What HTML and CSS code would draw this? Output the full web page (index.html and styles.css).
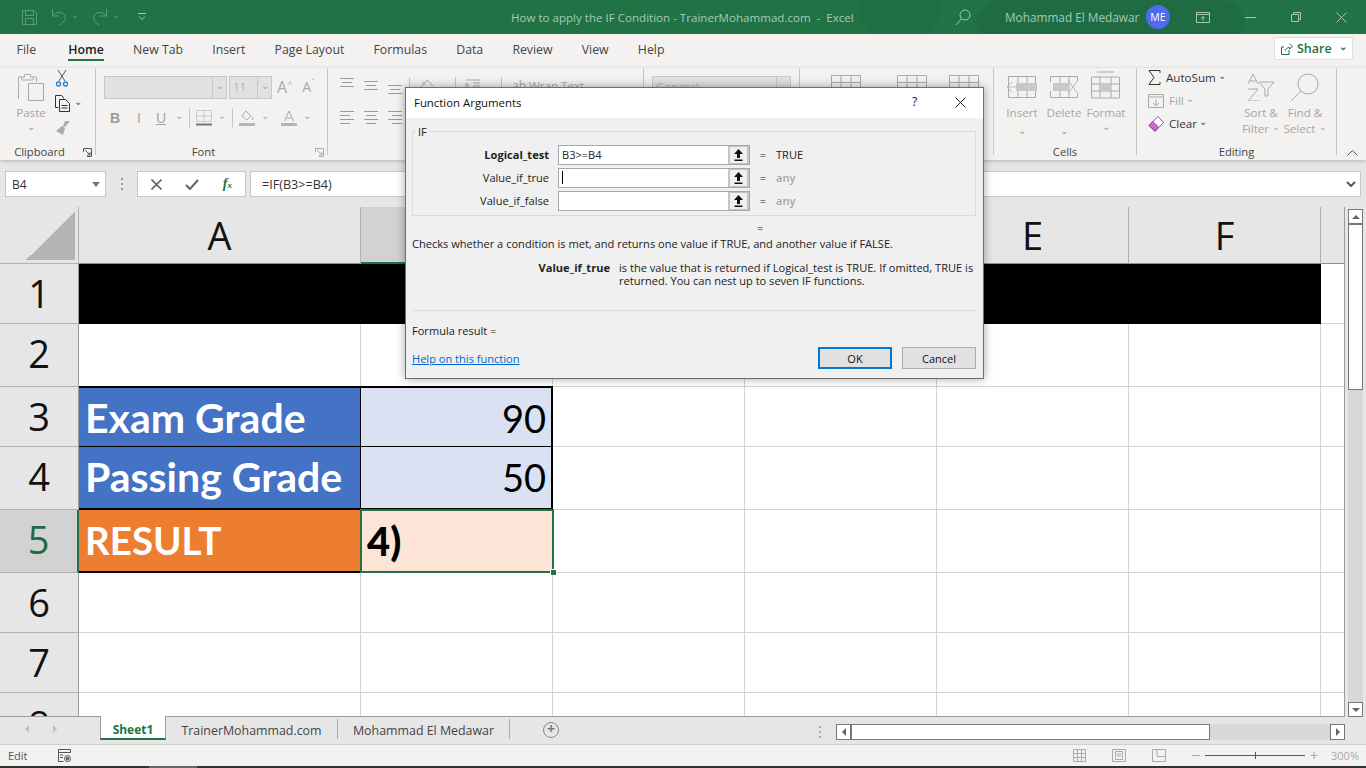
FILE: index.html
```html
<!DOCTYPE html>
<html lang="en">
<head>
    <meta charset="UTF-8">
    <title>How to apply the IF Condition - TrainerMohammad.com - Excel</title>
    <link rel="stylesheet" href="styles.css">
</head>
<body>
    <div class="titlebar">
        <div class="qat">
            <svg class="ico" width="17" height="17" viewBox="0 0 17 17"><path d="M1.500 1.500h12l2 2v12h-14zM4.500 1.500v5h8v-5M4.500 15.500v-6h8v6"/></svg>
            <svg class="ico undo" width="16" height="18" viewBox="0 0 16 18"><path d="M1.500 1v7h7M1.500 8c3-4 9-5 12-1 2 4-1 8-5 10"/></svg>
            <span class="qat-chev">&#8964;</span>
            <svg class="ico redo" width="16" height="18" viewBox="0 0 16 18"><path d="M14.500 1v7h-7M14.500 8c-3-4-9-5-12-1-2 4 1 8 5 10"/></svg>
            <span class="qat-chev">&#8964;</span>
            <svg class="ico custom" width="8" height="8" viewBox="0 0 8 8"><path d="M0 .5h8M1 3.500l3 3 3-3"/></svg>
        </div>
        <div class="doc-title">How to apply the IF Condition - TrainerMohammad.com &nbsp;- &nbsp;Excel</div>
        <svg class="ico search" width="16" height="17" viewBox="0 0 16 17"><circle cx="10" cy="6" r="5"/><path d="M6.500 9.500L1 16"/></svg>
        <div class="user">Mohammad El Medawar</div>
        <div class="avatar">ME</div>
        <div class="winbtns">
            <svg class="ico" width="14" height="11" viewBox="0 0 14 11"><path d="M.5.500h13v10H.5zM.5 2.500h13M7 9V4.500M5 6.500l2-2 2 2"/></svg>
            <svg class="ico" width="11" height="1" viewBox="0 0 11 1"><path d="M0 .5h11"/></svg>
            <svg class="ico" width="10" height="10" viewBox="0 0 10 10"><path d="M.5 2.500h7v7h-7zM2.500 2.500v-2h7v7h-2"/></svg>
            <svg class="ico" width="11" height="11" viewBox="0 0 11 11"><path d="M.5.500l10 10M10.500.500l-10 10"/></svg>
        </div>
    </div>

    <div class="tabs">
        <span class="tab file">File</span>
        <span class="tab active">Home</span>
        <span class="tab">New Tab</span>
        <span class="tab">Insert</span>
        <span class="tab">Page Layout</span>
        <span class="tab">Formulas</span>
        <span class="tab">Data</span>
        <span class="tab">Review</span>
        <span class="tab">View</span>
        <span class="tab">Help</span>
        <div class="share">
            <svg class="ico" width="12" height="12" viewBox="0 0 12 12"><path d="M8.500 1l3 2.500-3 2.500V4.500C6 4.500 4.500 6 4 8M8 7v4.500H.5V4H3"/></svg>
            <span>Share</span>
            <span class="share-chev">&#8964;</span>
        </div>
    </div>

    <div class="ribbon">
        <div class="group g-clip">
            <div class="group-body clip-body">
                <div class="big-btn paste">
                    <svg class="ico" width="28" height="30" viewBox="0 0 28 30"><path d="M1.500 27V5h6V2.500h6V5h6v5M5 5v3h11V5"/><path class="soft" d="M11.500 11.500h15v17h-15z"/></svg>
                    <span class="dim">Paste</span>
                    <span class="chev dim">&#8964;</span>
                </div>
                <div class="clip-tools">
                    <svg width="12" height="17" viewBox="0 0 12 17"><path d="M2 0l7 11M10 0L3 11" stroke="#555" fill="none"/><circle cx="2.500" cy="14" r="2" stroke="#2b88d8" fill="none" stroke-width="1.500"/><circle cx="9.500" cy="14" r="2" stroke="#2b88d8" fill="none" stroke-width="1.500"/></svg>
                    <div class="copy-row">
                        <svg width="17" height="17" viewBox="0 0 17 17" fill="none" stroke="#333"><path d="M4.500 12.500h-3V.5h6l2 2v1"/><path d="M5.500 4.500h6l4 4v8h-10zM7.500 10.500h6M7.500 13h6"/></svg>
                        <span class="chev small">&#8964;</span>
                    </div>
                    <svg width="16" height="16" viewBox="0 0 16 16" fill="#aaa"><path d="M10 1l5 0-5 6-2-1zM7 6l3 2-2 7L1 11z"/></svg>
                </div>
            </div>
            <div class="group-label off-center">Clipboard<svg class="launcher" width="9" height="9" viewBox="0 0 9 9"><path d="M.5 4V.5H8.500V8.500H4M2 2l5 5M7 4v3H4" fill="none" stroke="#555"/></svg></div>
        </div>

        <div class="group g-font">
            <div class="group-body font-body">
                <div class="font-row">
                    <div class="combo font-name"><span></span><i class="combo-btn">&#8964;</i></div>
                    <div class="combo font-size"><span>11</span><i class="combo-btn">&#8964;</i></div>
                    <span class="grow-a">A<sup>^</sup></span>
                    <span class="shrink-a">A<sup>&#711;</sup></span>
                </div>
                <div class="font-row second">
                    <b class="fmt b">B</b>
                    <i class="fmt i">I</i>
                    <u class="fmt u">U</u>
                    <span class="chev small dim">&#8964;</span>
                    <span class="vsep"></span>
                    <svg width="16" height="16" viewBox="0 0 16 16" fill="none" stroke="#aaa" stroke-dasharray="1 1"><path d="M.5.500h15v11H.5zM8 .5v11M.5 6h15"/><path d="M0 14.500h16" stroke="#777" stroke-width="2" stroke-dasharray="none"/></svg>
                    <span class="chev small dim">&#8964;</span>
                    <span class="vsep"></span>
                    <svg width="16" height="16" viewBox="0 0 16 16" fill="none" stroke="#aaa"><path d="M7 1l5 5-4 4-5-4zM13 7l1 3"/><path d="M0 14.500h16" stroke="#b5b5b5" stroke-width="3"/></svg>
                    <span class="chev small dim">&#8964;</span>
                    <svg class="font-a" width="16" height="16" viewBox="0 0 16 16" fill="none" stroke="#aaa"><path d="M3.500 11L8 1l4.500 10M5 8h6"/><path d="M0 14.500h16" stroke="#b5b5b5" stroke-width="3"/></svg>
                    <span class="chev small dim">&#8964;</span>
                </div>
            </div>
            <div class="group-label off-center">Font<svg class="launcher off" width="9" height="9" viewBox="0 0 9 9"><path d="M.5 4V.5H8.500V8.500H4M2 2l5 5M7 4v3H4" fill="none" stroke="#aaa"/></svg></div>
        </div>

        <div class="group g-align">
            <div class="group-body align-body">
                <div class="align-icons">
                    <svg width="14" height="17" viewBox="0 0 14 17" stroke="#999"><path d="M0 .5h14M2 4.500h10M0 8.500h14"/></svg>
                    <svg width="14" height="17" viewBox="0 0 14 17" stroke="#999"><path d="M0 3.500h14M2 7.500h10M0 11.500h14"/></svg>
                    <svg width="14" height="17" viewBox="0 0 14 17" stroke="#999"><path d="M0 7.500h14M2 11.500h10M0 15.500h14"/></svg>
                    <svg width="14" height="13" viewBox="0 0 14 13" stroke="#999"><path d="M0 .5h14M0 4.500h10M0 8.500h14M0 12.500h10"/></svg>
                    <svg width="14" height="13" viewBox="0 0 14 13" stroke="#999"><path d="M0 .5h14M2 4.500h10M0 8.500h14M2 12.500h10"/></svg>
                    <svg width="14" height="13" viewBox="0 0 14 13" stroke="#999"><path d="M0 .5h14M4 4.500h10M0 8.500h14M4 12.500h10"/></svg>
                </div>
                <div class="wrap-part">
                    <span class="vsep tall"></span>
                    <svg class="orient" width="16" height="12" viewBox="0 0 16 12" fill="none" stroke="#aaa"><path d="M1 10L8 2l6 6M3 4l3 3"/></svg>
                    <span class="vsep tall s-a"></span>
                    <svg class="indent" width="16" height="12" viewBox="0 0 16 12" fill="none" stroke="#aaa"><path d="M1 2h14M8 5h7M8 8h7M1 5l3 2-3 2z"/></svg>
                    <span class="vsep tall s-b"></span>
                    <span class="dim wrap-label"><small>ab</small> Wrap Text</span>
                </div>
            </div>
        </div>

        <div class="group g-number">
            <div class="group-body"><div class="combo general"><span>General</span><i class="combo-btn">&#8964;</i></div></div>
        </div>

        <div class="group g-styles">
            <div class="group-body styles-body">
                <svg class="cellgrid" width="30" height="22" viewBox="0 0 30 22"><path d="M.5.500h29v21H.5zM10 .5v21M20 .5v21M.5 7.500h29M.5 14.500h29"/></svg>
                <svg class="cellgrid" width="30" height="22" viewBox="0 0 30 22"><path d="M.5.500h29v21H.5zM10 .5v21M20 .5v21M.5 7.500h29M.5 14.500h29"/></svg>
                <svg class="cellgrid third" width="30" height="22" viewBox="0 0 30 22"><path d="M.5.500h29v21H.5zM10 .5v21M20 .5v21M.5 7.500h29M.5 14.500h29"/></svg>
            </div>
        </div>

        <div class="group g-cells">
            <div class="group-body cells-body">
                <div class="big-btn">
                    <svg width="32" height="24" viewBox="0 0 32 24" fill="none" stroke="#aaa"><path d="M2.500 1.500h27v21h-27zM12 1.500v21M21 1.500v21M2.500 1.500v6M2.500 16v6"/><path d="M10 8h21v8H10z" fill="#c8c8c8" stroke="none"/><path d="M15 12H1M6 7l-5 5 5 5" stroke="#bbb"/></svg>
                    <span class="dim">Insert</span>
                    <span class="chev dim">&#8964;</span>
                </div>
                <div class="big-btn">
                    <svg width="32" height="24" viewBox="0 0 32 24" fill="none" stroke="#aaa"><path d="M2.500 1.500h27M2.500 22.500h27M2.500 1.500v6M2.500 16v6M29.500 1.500v4M29.500 18v4M12 1.500v21M21 1.500v21"/><path d="M5 8h15v8H5z" fill="#c8c8c8" stroke="none"/><path d="M20 5l10 14M30 5L20 19" stroke="#bbb"/></svg>
                    <span class="dim">Delete</span>
                    <span class="chev dim">&#8964;</span>
                </div>
                <div class="big-btn">
                    <svg width="30" height="27" viewBox="0 0 30 27" fill="none" stroke="#aaa"><path d="M6 .5h17M.5 5.500h28v21H.5zM9 5.500v21M20 5.500v21M.5 12.500h28M.5 19.500h28"/><path d="M9 12h11v7H9z" fill="#c8c8c8" stroke="none"/></svg>
                    <span class="dim">Format</span>
                    <span class="chev dim">&#8964;</span>
                </div>
            </div>
            <div class="group-label">Cells</div>
        </div>

        <div class="group g-edit">
            <div class="group-body edit-body">
                <div class="edit-col">
                    <div class="edit-row">
                        <svg width="13" height="15" viewBox="0 0 13 15" fill="none" stroke="#333"><path d="M12 3V.5H1l5 7-5 7h11V12"/></svg>
                        <span>AutoSum</span><span class="chev small auto-chev">&#8964;</span>
                    </div>
                    <div class="edit-row dim">
                        <svg width="16" height="14" viewBox="0 0 16 14" fill="none" stroke="#aaa"><path d="M.5.500h15v13H.5zM.5 3h15M8 5v7M5 9l3 3 3-3"/></svg>
                        <span>Fill</span><span class="chev small">&#8964;</span>
                    </div>
                    <div class="edit-row">
                        <svg width="16" height="16" viewBox="0 0 16 16"><path d="M10 .5l5.500 6L7 15.500l-6-6z" fill="#fff" stroke="#a33ea8"/><path d="M4.500 5.500L10.500 11 7 15l-6-5.500z" fill="#c86fc9" stroke="#a33ea8"/></svg>
                        <span>Clear</span><span class="chev small">&#8964;</span>
                    </div>
                </div>
                <div class="big-btn sort">
                    <svg width="30" height="28" viewBox="0 0 30 28" fill="none" stroke="#aaa"><path d="M13 28H2L12 16H2M2 11L7 1l5 10M3.500 8h7M13 9h15l-6 7v7h-3v-7z"/></svg>
                    <span class="dim two">Sort &amp;<br>Filter <i class="inline-chev">&#8964;</i></span>
                </div>
                <div class="big-btn find">
                    <svg width="30" height="28" viewBox="0 0 30 28" fill="none" stroke="#aaa"><circle cx="18" cy="11" r="10"/><path d="M11 18L1 28"/></svg>
                    <span class="dim two">Find &amp;<br>Select <i class="inline-chev">&#8964;</i></span>
                </div>
            </div>
            <div class="group-label">Editing</div>
        </div>
        <div class="collapse-btn"><svg class="ico-dark" width="11" height="6" viewBox="0 0 11 6"><path d="M.5 5.500l5-5 5 5"/></svg></div>
    </div>

    <div class="fbar">
        <div class="namebox"><span>B4</span><i class="caret-down"></i></div>
        <div class="fbar-dots"><i></i><i></i><i></i></div>
        <div class="fbar-btns">
            <svg width="11" height="11" viewBox="0 0 11 11" fill="none" stroke="#666" stroke-width="1.600"><path d="M.5.500l10 10M10.500.500l-10 10"/></svg>
            <svg width="14" height="11" viewBox="0 0 14 11" fill="none" stroke="#666" stroke-width="2"><path d="M1 6l4 4 8-9"/></svg>
            <span class="fx">f<sub>x</sub></span>
        </div>
        <div class="fbar-input"><span>=IF(B3&gt;=B4)</span><svg class="ico-dark" width="10" height="6" viewBox="0 0 10 6"><path d="M1 1l4 4 4-4" stroke-width="2"/></svg></div>
    </div>

    <div class="sheet-wrap">
        <div class="sheet">
            <div class="corner"><i></i></div>
            <div class="ch">A</div>
            <div class="ch selected"></div>
            <div class="ch"></div>
            <div class="ch"></div>
            <div class="ch">E</div>
            <div class="ch">F</div>
            <div class="ch blank"></div>

            <div class="rh">1</div>
            <div class="c black"></div>
            <div class="c"></div>

            <div class="rh tall-row">2</div>
            <div class="c"></div><div class="c"></div><div class="c"></div><div class="c"></div><div class="c"></div><div class="c"></div><div class="c"></div>

            <div class="rh">3</div>
            <div class="c val-label blue top-thick">Exam Grade</div>
            <div class="c num pale top-thick right-thick">90</div>
            <div class="c"></div><div class="c"></div><div class="c"></div><div class="c"></div><div class="c"></div>

            <div class="rh">4</div>
            <div class="c val-label blue bottom-thick">Passing Grade</div>
            <div class="c num pale bottom-thick right-thick">50</div>
            <div class="c"></div><div class="c"></div><div class="c"></div><div class="c"></div><div class="c"></div>

            <div class="rh active">5</div>
            <div class="c val-label orange bottom-thick">RESULT</div>
            <div class="c picked">4)<i class="handle"></i></div>
            <div class="c"></div><div class="c"></div><div class="c"></div><div class="c"></div><div class="c"></div>

            <div class="rh">6</div>
            <div class="c"></div><div class="c"></div><div class="c"></div><div class="c"></div><div class="c"></div><div class="c"></div><div class="c"></div>

            <div class="rh">7</div>
            <div class="c"></div><div class="c"></div><div class="c"></div><div class="c"></div><div class="c"></div><div class="c"></div><div class="c"></div>

            <div class="rh clipped">8</div>
            <div class="c"></div><div class="c"></div><div class="c"></div><div class="c"></div><div class="c"></div><div class="c"></div><div class="c"></div>
        </div>
        <div class="vscroll">
            <div class="sb-btn up"><i></i></div>
            <div class="sb-thumb"></div>
            <div class="sb-track"></div>
            <div class="sb-btn down"><i></i></div>
        </div>
    </div>

    <div class="sheetbar">
        <div class="sheet-nav"><i class="tri-left"></i><i class="tri-right"></i></div>
        <div class="sheet-tab current">Sheet1</div>
        <div class="sheet-tab sep">TrainerMohammad.com</div>
        <div class="sheet-tab sep last">Mohammad El Medawar</div>
        <div class="add-sheet">+</div>
        <div class="hs-dots"><i></i><i></i><i></i></div>
        <div class="hscroll">
            <div class="hs-btn"><i class="tri-left dark"></i></div>
            <div class="hs-thumb"></div>
            <div class="hs-track"></div>
            <div class="hs-btn"><i class="tri-right dark"></i></div>
        </div>
    </div>

    <div class="status">
        <span class="mode">Edit</span>
        <svg class="macro" width="13" height="13" viewBox="0 0 13 13" fill="none" stroke="#555"><path d="M.5.500h12v3H.5zM.5 3.500v9h5M2 6h3M2 8.500h3"/><circle cx="9.500" cy="9.500" r="3"/><circle cx="9.500" cy="9.500" r="1.300" fill="#555"/></svg>
        <div class="views">
            <svg width="13" height="13" viewBox="0 0 13 13"><path d="M.5.500h12v12H.5zM4.500.5v12M8.500.5v12M.5 4.500h12M.5 8.500h12"/></svg>
            <svg width="14" height="13" viewBox="0 0 14 13"><path d="M.5.500h13v12H.5zM3.500 2.500h7v8h-7zM5 5h4M5 7h4"/></svg>
            <svg width="14" height="13" viewBox="0 0 14 13"><path d="M.5.500h13v12H.5zM5 .5v7h8"/></svg>
        </div>
        <div class="zoom">
            <i class="zoom-minus"></i>
            <div class="slider"><i></i></div>
            <span class="zoom-plus">+</span>
            <span class="zoom-val">300%</span>
        </div>
    </div>
    <div class="taskstrip"><i></i></div>

    <div class="dialog">
        <div class="dlg-title">
            <span>Function Arguments</span>
            <span class="dlg-help">?</span>
            <svg class="dlg-close" width="11" height="11" viewBox="0 0 11 11" fill="none" stroke="#222"><path d="M.5.500l10 10M10.500.500l-10 10"/></svg>
        </div>
        <div class="dlg-body">
            <div class="fn-box">
                <span class="fn-name">IF</span>
                <div class="arg-row">
                    <label class="strong">Logical_test</label>
                    <div class="arg-input"><span>B3&gt;=B4</span><button class="ref-btn"><svg width="11" height="12" viewBox="0 0 11 12"><path d="M5.500 0L10 5H7v4H4V5H1zM1.500 10.500h8V12h-8z" fill="#111"/></svg></button></div>
                    <span class="eq">=</span><span class="res">TRUE</span>
                </div>
                <div class="arg-row">
                    <label>Value_if_true</label>
                    <div class="arg-input"><span class="cursor"></span><button class="ref-btn"><svg width="11" height="12" viewBox="0 0 11 12"><path d="M5.500 0L10 5H7v4H4V5H1zM1.500 10.500h8V12h-8z" fill="#111"/></svg></button></div>
                    <span class="eq">=</span><span class="res any">any</span>
                </div>
                <div class="arg-row">
                    <label>Value_if_false</label>
                    <div class="arg-input"><span></span><button class="ref-btn"><svg width="11" height="12" viewBox="0 0 11 12"><path d="M5.500 0L10 5H7v4H4V5H1zM1.500 10.500h8V12h-8z" fill="#111"/></svg></button></div>
                    <span class="eq">=</span><span class="res any">any</span>
                </div>
            </div>
            <div class="eq-line">=</div>
            <p class="desc">Checks whether a condition is met, and returns one value if TRUE, and another value if FALSE.</p>
            <div class="arg-help">
                <b>Value_if_true</b>
                <p>is the value that is returned if Logical_test is TRUE. If omitted, TRUE is returned. You can nest up to seven IF functions.</p>
            </div>
            <hr>
            <p class="formula-result">Formula result =</p>
            <div class="dlg-foot">
                <a class="help-link">Help on this function</a>
                <button class="dlg-btn primary">OK</button>
                <button class="dlg-btn">Cancel</button>
            </div>
        </div>
    </div>
</body>
</html>
```
FILE: styles.css
```css
* {
    box-sizing: border-box;
}
html, body {
    margin: 0;
    width: 1366px;
    height: 768px;
    overflow: hidden;
}
body {
    position: relative;
    display: flex;
    flex-direction: column;
    font-family: "Open Sans", "Noto Sans", sans-serif;
    font-size: 12px;
    color: #333;
    background: #f3f2f1;
}
i {
    font-style: normal;
}
.ico {
    fill: none;
    stroke: currentColor;
}
.ico-dark {
    fill: none;
    stroke: #555;
}
.dim {
    color: #a6a6a6;
}

/* title bar */
.titlebar {
    height: 34px;
    flex: none;
    display: flex;
    align-items: center;
    color: #a5c9b5;
    background:
        radial-gradient(ellipse 190px 60px at 1110px 22px, #1f6c43 70%, transparent 72%),
        radial-gradient(ellipse 50px 40px at 900px 10px, #206f44 80%, transparent 82%),
        #217346;
}
.qat {
    width: 511px;
    flex: none;
    display: flex;
    align-items: center;
    padding-left: 21px;
    color: #5c9a7a;
}
.undo {
    margin-left: 13px;
}
.redo {
    margin-left: 9px;
}
.qat-chev {
    width: 16px;
    margin-bottom: 6px;
    text-align: center;
    font-size: 10px;
}
.custom {
    margin-left: 14px;
    color: #a5c9b5;
}
.doc-title {
    width: 442px;
    flex: none;
    font-size: 11.570px;
    white-space: nowrap;
}
.search {
    flex: none;
    margin-left: 2px;
}
.user {
    width: 141px;
    margin-left: 34px;
    font-size: 11.800px;
    white-space: nowrap;
    flex: none;
}
.avatar {
    width: 24px;
    height: 24px;
    flex: none;
    border-radius: 50%;
    background: #4f6bed;
    color: #fff;
    font-size: 10.500px;
    line-height: 24px;
    text-align: center;
}
.winbtns {
    display: flex;
    align-items: center;
    flex: none;
    margin-left: 26px;
    gap: 35px;
}

/* tabs */
.tabs {
    height: 34px;
    flex: none;
    display: flex;
    align-items: center;
    padding-left: 2px;
    font-size: 12.300px;
    color: #444;
    position: relative;
}
.tab {
    padding: 0 14.600px;
    height: 24px;
    line-height: 26px;
    margin-bottom: 4px;
    position: relative;
    white-space: nowrap;
}
.tab.file {
    margin-right: 3px;
}
.tab.active {
    font-weight: 600;
    color: #222;
}
.tab.active::after {
    content: "";
    position: absolute;
    left: 14px;
    right: 14px;
    bottom: 0;
    height: 2px;
    background: #217346;
}
.share {
    margin-left: auto;
    margin-right: 13px;
    margin-bottom: 5px;
    width: 79px;
    height: 23px;
    display: flex;
    align-items: center;
    padding-left: 6px;
    gap: 4px;
    background: #fff;
    border: 1px solid #e1dfdd;
    border-radius: 2px;
    color: #217346;
    font-weight: 600;
    font-size: 12.500px;
}
.share-chev {
    margin-left: auto;
    margin-right: 5px;
    margin-bottom: 6px;
    font-size: 10px;
}

/* ribbon */
.ribbon {
    height: 92px;
    flex: none;
    display: flex;
    position: relative;
    z-index: 1;
    font-size: 11.600px;
    background: #f3f2f1;
    box-shadow: 0 1px 4px rgba(0,0,0,0.22);
}
.group {
    position: relative;
    display: flex;
    flex-direction: column;
    height: 87px;
    flex: none;
    border-right: 1px solid #c8c6c4;
}
.group-body {
    flex: 1;
    min-height: 0;
}
.group-label {
    height: 18px;
    margin-bottom: -6px;
    text-align: center;
    line-height: 18px;
    color: #444;
    font-size: 11.200px;
    position: relative;
}
.group-label.off-center {
    padding-right: 16px;
}
.launcher {
    position: absolute;
    right: 3px;
    top: 5px;
}
.g-clip {
    width: 96px;
}
.g-font {
    width: 232px;
}
.g-align {
    width: 316px;
}
.g-number {
    width: 156px;
}
.g-styles {
    width: 194px;
}
.g-cells {
    width: 143px;
}
.g-edit {
    width: 200px;
}
.big-btn {
    display: flex;
    flex-direction: column;
    align-items: center;
    line-height: 16px;
}
.chev {
    line-height: 10px;
    font-size: 10px;
    color: #999;
}
.chev.small {
    color: #555;
    align-self: center;
    margin-bottom: 6px;
}
.chev.small.dim, .dim .chev.small {
    color: #a6a6a6;
}

.clip-body {
    display: flex;
    padding: 4px 0 0 16px;
}
.paste {
    width: 30px;
}
.paste .ico {
    color: #aaa;
    margin-bottom: 3px;
}
.paste .ico .soft {
    fill: #f3f2f1;
}
.clip-tools {
    margin-left: 8px;
    margin-top: -2px;
    display: flex;
    flex-direction: column;
    align-items: flex-start;
    gap: 8px;
    padding-left: 1px;
}
.clip-tools > svg:first-child {
    margin-left: 1px;
}
.copy-row {
    display: flex;
    gap: 3px;
    margin-left: -1px;
}

.font-body {
    padding: 8px 0 0 8px;
}
.font-row {
    display: flex;
    align-items: center;
    height: 23px;
}
.combo {
    height: 23px;
    display: flex;
    background: #e1e1e1;
    border: 1px solid #c8c8c8;
    color: #b0b0b0;
    line-height: 20px;
}
.combo span {
    flex: 1;
    padding-left: 3px;
}
.combo-btn {
    width: 14px;
    border-left: 1px solid #c8c8c8;
    text-align: center;
    color: #a6a6a6;
    font-size: 10px;
    line-height: 16px;
}
.font-name {
    width: 123px;
}
.font-size {
    width: 43px;
    margin-left: 2px;
}
.grow-a {
    margin-left: 5px;
    margin-bottom: 2px;
    font-size: 16px;
    color: #aaa;
}
.shrink-a {
    margin-left: 10px;
    margin-bottom: 2px;
    font-size: 14px;
    color: #aaa;
}
.grow-a sup, .shrink-a sup {
    font-size: 9px;
    line-height: 0;
}
.font-row.second {
    margin-top: 7px;
    gap: 6px;
    padding-left: 3px;
    color: #a6a6a6;
}
.fmt {
    width: 16px;
    font-size: 14px;
    text-align: center;
    font-family: "Liberation Sans", sans-serif;
}
.fmt.b {
    color: #999;
}
.fmt.i {
    margin-left: 2px;
}
.vsep {
    display: block;
    width: 1px;
    height: 20px;
    background: #c8c6c4;
}
.font-a {
    margin-left: 6px;
}

.align-body {
    display: flex;
    padding: 10px 0 0 12px;
}
.align-icons {
    display: grid;
    grid-template-columns: repeat(3, 14px);
    grid-template-rows: 17px 13px;
    gap: 16px 10px;
}
.wrap-part {
    display: flex;
    align-items: flex-start;
    margin-left: 7px;
    margin-top: -1px;
}
.wrap-part .tall {
    height: 24px;
}
.orient {
    margin: 1px 0 0 9px;
}
.s-a {
    margin-left: 20px;
}
.indent {
    margin: 1px 0 0 9px;
}
.s-b {
    margin-left: 20px;
}
.wrap-label {
    margin: 0 0 0 10px;
}
.wrap-label small {
    font-size: 12px;
}
.g-number .group-body {
    padding: 8px 0 0 8px;
}
.general {
    width: 139px;
}
.styles-body {
    display: flex;
    padding: 7px 0 0 31px;
    gap: 36px;
}
.cellgrid {
    fill: none;
    stroke: #aaa;
}
.cellgrid.third {
    margin-left: -14px;
}

.cells-body {
    display: flex;
    padding: 5px 0 0 7px;
}
.cells-body .big-btn {
    width: 42px;
    height: 60px;
}
.cells-body svg {
    height: 28px;
    flex: none;
}
.cells-body .dim {
    margin-top: 4px;
}
.cells-body .big-btn:last-child svg {
    margin-top: -2px;
}
.cells-body .big-btn:last-child .dim {
    margin-top: 6px;
}
.cells-body .big-btn:last-child .chev {
    margin-top: 0;
}
.edit-body {
    display: flex;
    padding-top: 3px;
}
.edit-col {
    width: 99px;
    padding-left: 11px;
    margin-top: -5px;
}
.edit-row {
    display: flex;
    align-items: center;
    gap: 5px;
    height: 23px;
}
.edit-row .chev.small {
    margin-left: -3px;
}
.edit-row .auto-chev {
    margin-left: 8px;
}
.big-btn.sort {
    width: 50px;
    margin-top: 2px;
}
.big-btn.find {
    width: 46px;
    margin-top: 2px;
    margin-left: -4px;
}
.two {
    margin-top: 4px;
    text-align: center;
}
.inline-chev {
    font-size: 9px;
    line-height: 0;
    vertical-align: 3px;
}
.collapse-btn {
    position: absolute;
    right: 8px;
    bottom: 4px;
    line-height: 0;
}

/* formula bar */
.fbar {
    height: 47px;
    flex: none;
    display: flex;
    align-items: flex-start;
    padding-top: 11px;
    background: #e6e6e6;
}
.namebox {
    width: 101px;
    height: 26px;
    margin-left: 5px;
    display: flex;
    align-items: center;
    justify-content: space-between;
    padding: 0 5px 0 6px;
    background: #fff;
    border: 1px solid #c6c6c6;
    font-size: 12px;
}
.caret-down {
    border: 4px solid transparent;
    border-top: 5px solid #777;
    border-bottom: 0;
}
.fbar-dots {
    width: 31px;
    display: flex;
    flex-direction: column;
    align-items: center;
    gap: 3px;
    padding-top: 7px;
}
.fbar-dots i {
    width: 2px;
    height: 2px;
    background: #999;
}
.fbar-btns {
    width: 109px;
    height: 26px;
    display: flex;
    align-items: center;
    justify-content: space-between;
    padding: 0 13px 0 13px;
    background: #fff;
    border: 1px solid #c6c6c6;
    margin-right: 4px;
}
.fx {
    font-family: "Liberation Serif", serif;
    font-style: italic;
    font-weight: bold;
    font-size: 14px;
    color: #217346;
}
.fx sub {
    font-size: 9px;
    vertical-align: 0;
}
.fbar-input {
    width: 1111px;
    height: 26px;
    display: flex;
    align-items: center;
    justify-content: space-between;
    padding: 0 4px 0 11px;
    background: #fff;
    border: 1px solid #c6c6c6;
    font-size: 12.600px;
}

/* sheet */
.sheet-wrap {
    height: 510px;
    flex: none;
    display: flex;
    background: #e6e6e6;
}
.sheet {
    width: 1345px;
    flex: none;
    display: grid;
    grid-template-columns: 79px 282px repeat(5, 192px) 24px;
    grid-template-rows: 57px 60px 63px 60px 63px 63px 60px 60px 24px;
    overflow: hidden;
    border-right: 1px solid #9c9c9c;
    border-bottom: 1px solid #9c9c9c;
}
.corner {
    position: relative;
    background: #e6e6e6;
    border-right: 1px solid #b1b1b1;
    border-bottom: 1px solid #b1b1b1;
}
.corner i {
    position: absolute;
    right: 3px;
    bottom: 3px;
    width: 49px;
    height: 49px;
    background: linear-gradient(135deg, transparent 50%, #b4b4b4 50%);
}
.ch {
    background: #e6e6e6;
    border-right: 1px solid #b1b1b1;
    border-bottom: 1px solid #8f8f8f;
    color: #111;
    font-size: 38px;
    line-height: 56px;
    text-align: center;
}
.ch.blank {
    border-right: 0;
}
.ch.selected {
    background: #d2d2d2;
    border-bottom: 2px solid #217346;
}
.rh {
    background: #e6e6e6;
    border-right: 1px solid #9c9c9c;
    border-bottom: 1px solid #b1b1b1;
    color: #111;
    font-size: 38px;
    line-height: 58px;
    text-align: center;
    overflow: hidden;
}
.rh.active {
    background: #d2d2d2;
    color: #1e6b41;
    border-right: 2px solid #217346;
}
.rh.clipped {
    border-bottom: 0;
    line-height: 58px;
    padding-top: 2px;
}
.c {
    background: #fff;
    border-right: 1px solid #d4d4d4;
    border-bottom: 1px solid #d4d4d4;
    min-width: 0;
}
.black {
    grid-column: span 6;
    background: #000;
    border: 0;
}
.val-label {
    border-right: 1px solid #000;
    border-bottom: 1px solid #000;
    padding-left: 6px;
    color: #fff;
    font-family: Lato, sans-serif;
    font-weight: 700;
    font-size: 41px;
    line-height: 60px;
    white-space: nowrap;
}
.blue {
    background: #4472c4;
}
.orange {
    background: #ed7d31;
    font-size: 38.500px;
}
.pale {
    background: #d9e1f2;
}
.num {
    border-right: 1px solid #000;
    border-bottom: 1px solid #000;
    padding-right: 5px;
    color: #000;
    font-family: Lato, sans-serif;
    font-size: 38px;
    line-height: 60px;
    text-align: right;
}
.top-thick {
    border-top: 2px solid #000;
    margin-top: -1px;
}
.bottom-thick {
    border-bottom: 2px solid #000;
}
.right-thick {
    border-right: 2px solid #000;
}
.picked {
    position: relative;
    margin: -1px -1px 0 -1px;
    background: #fce4d6;
    border: 2px solid #217346;
    padding-left: 5px;
    color: #000;
    font-family: Lato, sans-serif;
    font-weight: 900;
    font-size: 40px;
    line-height: 60px;
}
.handle {
    position: absolute;
    right: -4px;
    bottom: -4px;
    width: 6px;
    height: 6px;
    background: #217346;
    border: 1px solid #fff;
    border-right: 0;
    border-bottom: 0;
}

/* scroll bars */
.vscroll {
    width: 21px;
    flex: none;
    display: flex;
    flex-direction: column;
    padding: 2px 3px 0 3px;
}
.sb-btn {
    height: 15px;
    flex: none;
    background: #fff;
    border: 1px solid #777;
    display: flex;
    align-items: center;
    justify-content: center;
}
.sb-btn i {
    border: 4px solid transparent;
}
.sb-btn.up i {
    border-bottom: 4px solid #666;
    border-top: 0;
}
.sb-btn.down i {
    border-top: 4px solid #666;
    border-bottom: 0;
}
.sb-thumb {
    height: 166px;
    flex: none;
    background: #fff;
    border: 1px solid #777;
}
.sb-track {
    flex: 1;
    background: #d8d8d8;
}

/* sheet tabs */
.sheetbar {
    height: 28px;
    flex: none;
    display: flex;
    align-items: flex-start;
    background: #e6e6e6;
    border-bottom: 1px solid #d0d0d0;
    font-size: 12.400px;
    color: #444;
}
.sheet-nav {
    width: 100px;
    height: 24px;
    display: flex;
    align-items: center;
    padding-left: 25px;
    gap: 24px;
}
.tri-left, .tri-right {
    border: 4px solid transparent;
}
.tri-left {
    border-right: 4px solid #c0c0c0;
    border-left: 0;
}
.tri-right {
    border-left: 4px solid #c0c0c0;
    border-right: 0;
}
.tri-left.dark {
    border-right-color: #666;
}
.tri-right.dark {
    border-left-color: #666;
}
.sheet-tab {
    height: 24px;
    line-height: 27px;
    white-space: nowrap;
    position: relative;
}
.sheet-tab.current {
    width: 66px;
    margin-top: -1px;
    height: 24px;
    background: #fff;
    border: 1px solid #9c9c9c;
    border-bottom: 2px solid #217346;
    border-top: 0;
    text-align: center;
    font-weight: 700;
    font-size: 12px;
    color: #217346;
}
.sheet-tab.sep {
    padding: 0 15px;
    width: 172px;
    text-align: center;
    border-right: 1px solid #aaa;
    height: 20px;
    margin-top: 2px;
    line-height: 23px;
}
.sheet-tab.last {
    padding: 0;
    width: 172px;
}
.add-sheet {
    width: 16px;
    height: 16px;
    margin: 5px 0 0 33px;
    border: 1.500px solid #888;
    border-radius: 50%;
    color: #777;
    font-weight: 700;
    font-size: 14px;
    line-height: 12px;
    text-align: center;
}
.hs-dots {
    display: flex;
    flex-direction: column;
    gap: 3px;
    margin: 9px 0 0 260px;
}
.hs-dots i {
    width: 2px;
    height: 2px;
    background: #aaa;
}
.hscroll {
    width: 509px;
    height: 16px;
    margin: 7px 0 0 15px;
    display: flex;
}
.hs-btn {
    width: 15px;
    flex: none;
    background: #fff;
    border: 1px solid #777;
    display: flex;
    align-items: center;
    justify-content: center;
}
.hs-thumb {
    width: 359px;
    flex: none;
    background: #fff;
    border: 1px solid #777;
}
.hs-track {
    flex: 1;
    background: #d8d8d8;
}

/* status bar */
.status {
    height: 21px;
    flex: none;
    display: flex;
    align-items: center;
    font-size: 11px;
    color: #555;
}
.mode {
    margin-left: 8px;
    width: 50px;
}
.views {
    display: flex;
    gap: 26px;
    margin-left: 1002px;
}
.views svg {
    fill: none;
    stroke: #aaa;
}
.zoom {
    display: flex;
    align-items: center;
    margin-left: 26px;
    color: #aaa;
}
.zoom-minus {
    width: 8px;
    height: 1px;
    background: #aaa;
}
.slider {
    position: relative;
    width: 100px;
    height: 1px;
    margin-left: 5px;
    background: #555;
}
.slider i {
    position: absolute;
    left: 50px;
    top: -3px;
    width: 1px;
    height: 7px;
    background: #555;
}
.zoom-plus {
    margin-left: 5px;
    font-size: 14px;
    line-height: 14px;
}
.zoom-val {
    margin-left: 13px;
    font-size: 11px;
}
.taskstrip {
    height: 2px;
    flex: none;
    background: #333;
}
.taskstrip i {
    display: block;
    width: 48px;
    height: 2px;
    margin-left: 149px;
    background: #666;
}

/* dialog */
.dialog {
    position: absolute;
    z-index: 2;
    left: 405px;
    top: 87px;
    width: 579px;
    height: 292px;
    background: #f0f0f0;
    border: 1px solid #6e6e6e;
    box-shadow: 0 0 9px rgba(0,0,0,0.35);
    font-size: 11.070px;
    line-height: 13px;
    color: #222;
}
.dlg-title {
    height: 30px;
    display: flex;
    align-items: center;
    padding: 0 0 2px 8px;
    background: #fff;
    font-size: 11.400px;
    color: #111;
    position: relative;
}
.dlg-help {
    position: absolute;
    left: 506px;
    top: 7px;
    font-size: 12px;
}
.dlg-close {
    position: absolute;
    left: 549px;
    top: 9px;
}
.dlg-body {
    padding: 13px 7px 0 6px;
}
.fn-box {
    position: relative;
    height: 85px;
    padding-top: 13px;
    border: 1px solid #dcdcdc;
}
.fn-name {
    position: absolute;
    left: 3px;
    top: -7px;
    padding: 0 2px;
    background: #f0f0f0;
}
.arg-row {
    display: grid;
    grid-template-columns: 136px 201px 26px 1fr;
    height: 20px;
    margin-bottom: 3px;
    align-items: center;
}
.arg-row label, .arg-row .eq, .arg-row .res {
    margin-bottom: 2px;
}
.arg-row label {
    text-align: right;
}
.arg-row label.strong {
    font-weight: 700;
}
.arg-input {
    margin-left: 9px;
    width: 192px;
    height: 20px;
    display: flex;
    background: #fff;
    border: 1px solid #a6a6a6;
}
.arg-input span {
    flex: 1;
    padding-left: 3px;
    line-height: 18px;
}
.arg-row .eq {
    text-align: center;
}
.arg-input .cursor::before {
    content: "";
    display: block;
    width: 1px;
    height: 13px;
    margin-top: 2px;
    background: #000;
}
.ref-btn {
    width: 21px;
    padding: 0;
    display: flex;
    align-items: center;
    justify-content: center;
    background: #f0f0f0;
    border: 2px solid #c4c4c4;
    border-top-width: 1px;
    border-bottom-width: 1px;
}
.res.any {
    color: #a6a6a6;
    font-weight: 600;
}
.eq-line {
    margin: 5px 0 0 344px;
    padding-left: 1px;
}
.desc {
    margin: 3px 0 0;
    white-space: nowrap;
}
.arg-help {
    display: grid;
    grid-template-columns: 198px 1fr;
    column-gap: 9px;
    margin-top: 11px;
}
.arg-help b {
    text-align: right;
}
.arg-help p {
    margin: 0;
}
.dialog hr {
    margin: 23px 0 0;
    border: 0;
    border-top: 1px solid #dcdcdc;
}
.formula-result {
    margin: 13px 0 0;
}
.dlg-foot {
    display: flex;
    align-items: center;
    margin-top: 10px;
}
.help-link {
    margin-right: auto;
    color: #0066cc;
    text-decoration: underline;
}
.dlg-btn {
    width: 74px;
    height: 22px;
    margin-left: 10px;
    padding: 0;
    background: #e1e1e1;
    border: 1px solid #adadad;
    font-family: inherit;
    font-size: 11px;
    color: #111;
}
.dlg-btn.primary {
    border: 2px solid #0078d7;
}
```
